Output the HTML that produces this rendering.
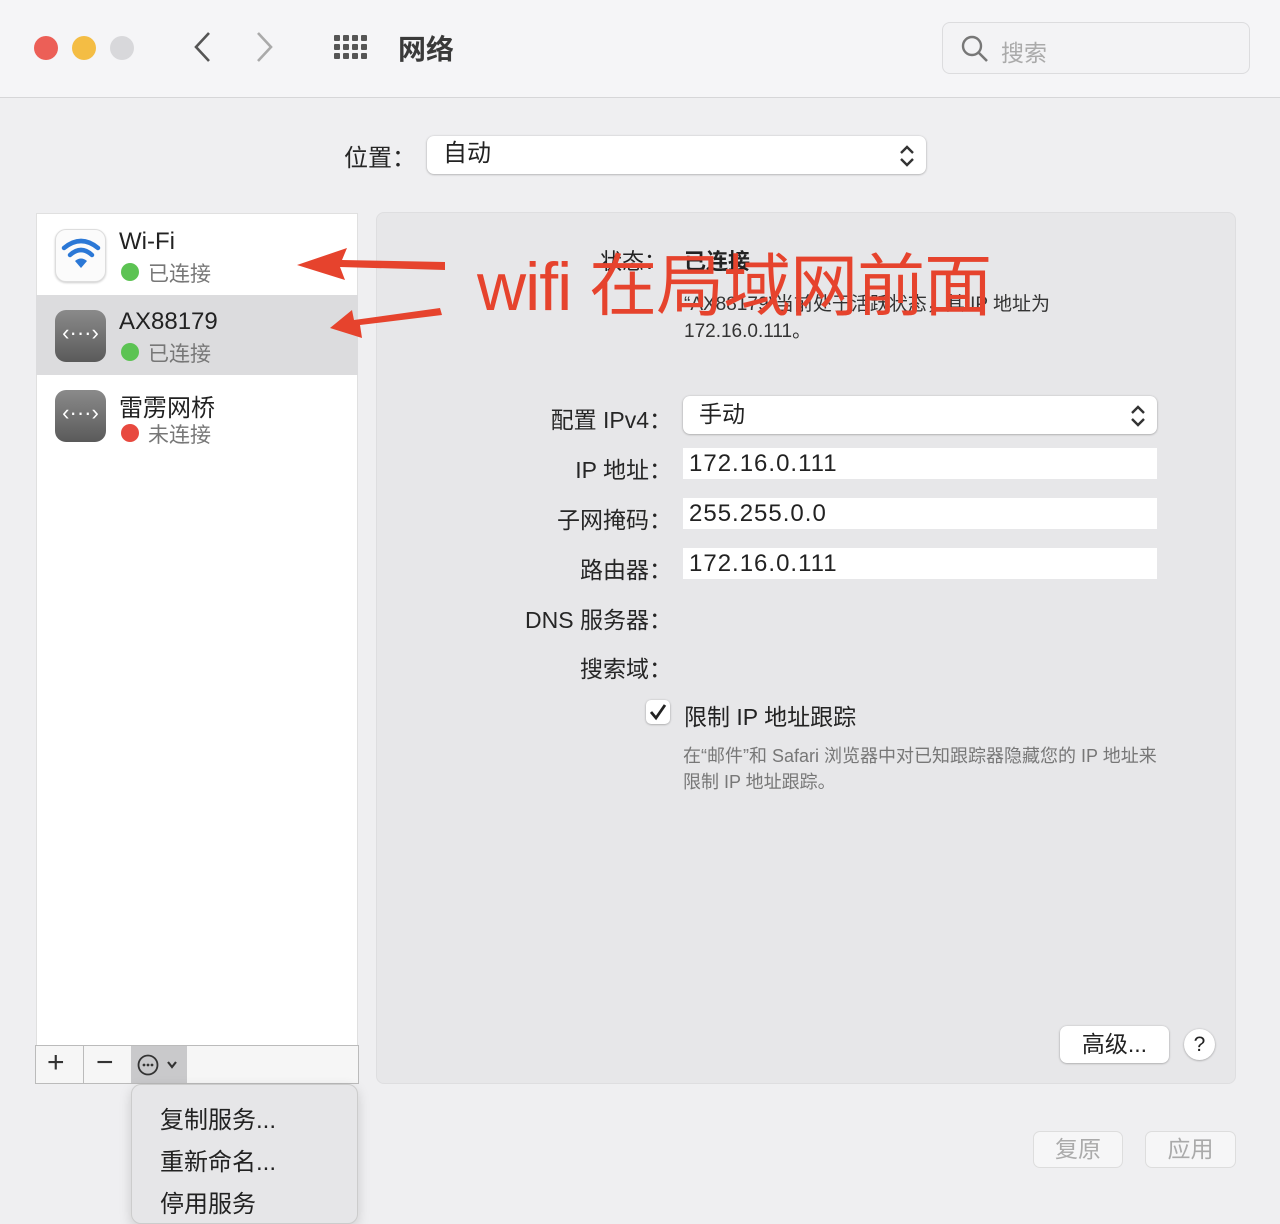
<!DOCTYPE html>
<html><head><meta charset="utf-8"><style>
*{margin:0;padding:0;box-sizing:border-box}
body{width:1280px;height:1204px;background:#efeff1;font-family:"Liberation Sans","Noto Sans CJK SC",sans-serif;color:#222;position:relative;overflow:hidden}
.a{position:absolute}
.lbl{position:absolute;font-size:23px;color:#262626;text-align:right;width:200px}
.fld{position:absolute;left:683px;width:474px;height:31px;background:#fff;font-size:24px;padding-left:6px;line-height:31px;letter-spacing:1px;color:#222}
.btn{position:absolute;background:#fff;border-radius:7px;box-shadow:0 0.5px 2px rgba(0,0,0,.35);font-size:23px;text-align:center}
</style></head><body>
<div class="a" style="left:0;top:0;width:1280px;height:98px;background:#f5f5f7;border-bottom:1px solid #d6d6d8"></div>
<div class="a" style="left:34px;top:36px;width:24px;height:24px;border-radius:50%;background:#ec5f57"></div>
<div class="a" style="left:72px;top:36px;width:24px;height:24px;border-radius:50%;background:#f4bd44"></div>
<div class="a" style="left:110px;top:36px;width:24px;height:24px;border-radius:50%;background:#d8d8db"></div>
<svg class="a" style="left:190px;top:30px" width="100" height="34"><path d="M19 3 L6 17 L19 31" stroke="#555" stroke-width="2.6" fill="none"/><path d="M76 3 L89 17 L76 31" stroke="#aaa" stroke-width="2.6" fill="none" transform="translate(-8,0)"/></svg>
<svg class="a" style="left:334px;top:34px" width="36" height="26"><g fill="#555"><rect x="0" y="1" width="6" height="6" rx="1"/><rect x="9" y="1" width="6" height="6" rx="1"/><rect x="18" y="1" width="6" height="6" rx="1"/><rect x="27" y="1" width="6" height="6" rx="1"/><rect x="0" y="10" width="6" height="6" rx="1"/><rect x="9" y="10" width="6" height="6" rx="1"/><rect x="18" y="10" width="6" height="6" rx="1"/><rect x="27" y="10" width="6" height="6" rx="1"/><rect x="0" y="19" width="6" height="6" rx="1"/><rect x="9" y="19" width="6" height="6" rx="1"/><rect x="18" y="19" width="6" height="6" rx="1"/><rect x="27" y="19" width="6" height="6" rx="1"/></g></svg>
<div class="a" style="left:398px;top:28px;font-size:28px;font-weight:bold;color:#3a3a3a">网络</div>
<div class="a" style="left:942px;top:22px;width:308px;height:52px;border:1px solid #dcdcde;border-radius:8px;background:#f3f3f5"></div>
<svg class="a" style="left:960px;top:34px" width="30" height="30"><circle cx="12" cy="12" r="9" stroke="#777" stroke-width="2.4" fill="none"/><path d="M19 19 L27 27" stroke="#777" stroke-width="2.6"/></svg>
<div class="a" style="left:1001px;top:34px;font-size:23px;color:#aaa">搜索</div>

<div class="a" style="left:344px;top:138px;font-size:24px;color:#262626">位置：</div>
<div class="btn" style="left:427px;top:136px;width:499px;height:38px;text-align:left;padding-left:16px;line-height:36px;font-size:24px">自动</div>
<svg class="a" style="left:898px;top:143px" width="18" height="26"><path d="M3 10 L9 4 L15 10 M3 16 L9 22 L15 16" stroke="#333" stroke-width="2.4" fill="none"/></svg>

<div class="a" style="left:36px;top:213px;width:322px;height:833px;background:#fff;border:1px solid #e0e0e0"></div>
<div class="a" style="left:36px;top:295px;width:322px;height:80px;background:#dcdcde"></div>
<div class="a" style="left:55px;top:229px;width:51px;height:53px;border-radius:11px;background:#fbfbfb;border:1px solid #ddd;box-shadow:0 1px 2px rgba(0,0,0,.2)"></div>
<svg class="a" style="left:58px;top:232px" width="46" height="46"><g fill="none" stroke="#2b78d6" stroke-width="4.5" stroke-linecap="round"><path d="M6 16 Q23 2 40 16"/><path d="M12 23 Q23 13 34 23"/></g><path d="M17 29 Q23 24 29 29 L23 36 Z" fill="#2b78d6"/></svg>
<div class="a" style="left:119px;top:228px;font-size:24px">Wi-Fi</div>
<div class="a" style="left:121px;top:263px;width:18px;height:18px;border-radius:50%;background:#5cc353"></div>
<div class="a" style="left:148px;top:258px;font-size:21px;color:#777">已连接</div>
<div class="a" style="left:55px;top:310px;width:51px;height:52px;border-radius:11px;background:linear-gradient(#8a8a8a,#5a5a5a)"></div>
<div class="a" style="left:55px;top:320px;width:51px;text-align:center;color:#fff;font-size:22px">‹···›</div>
<div class="a" style="left:119px;top:308px;font-size:24px">AX88179</div>
<div class="a" style="left:121px;top:343px;width:18px;height:18px;border-radius:50%;background:#5cc353"></div>
<div class="a" style="left:148px;top:338px;font-size:21px;color:#777">已连接</div>
<div class="a" style="left:55px;top:390px;width:51px;height:52px;border-radius:11px;background:linear-gradient(#8a8a8a,#5a5a5a)"></div>
<div class="a" style="left:55px;top:400px;width:51px;text-align:center;color:#fff;font-size:22px">‹···›</div>
<div class="a" style="left:119px;top:388px;font-size:24px">雷雳网桥</div>
<div class="a" style="left:121px;top:424px;width:18px;height:18px;border-radius:50%;background:#e8493f"></div>
<div class="a" style="left:148px;top:419px;font-size:21px;color:#777">未连接</div>

<div class="a" style="left:35px;top:1045px;width:324px;height:39px;background:#f6f6f6;border:1px solid #bbb"></div>
<div class="a" style="left:83px;top:1046px;width:1px;height:37px;background:#bbb"></div>
<div class="a" style="left:131px;top:1046px;width:56px;height:37px;background:#c9c9cb"></div>
<div class="a" style="left:47px;top:1046px;font-size:30px;color:#333">+</div>
<div class="a" style="left:96px;top:1046px;font-size:30px;color:#333">−</div>
<svg class="a" style="left:136px;top:1053px" width="48" height="24"><circle cx="12" cy="12" r="9.5" stroke="#333" stroke-width="1.8" fill="none"/><g fill="#333"><circle cx="8" cy="12" r="1.4"/><circle cx="12" cy="12" r="1.4"/><circle cx="16" cy="12" r="1.4"/></g><path d="M32 9 L36 14 L40 9" stroke="#333" stroke-width="2.2" fill="none"/></svg>
<div class="a" style="left:131px;top:1084px;width:227px;height:140px;background:#e6e6e8;border:1px solid #ccc;border-radius:10px;box-shadow:0 4px 12px rgba(0,0,0,.15)"></div>
<div class="a" style="left:160px;top:1100px;font-size:24px">复制服务...</div>
<div class="a" style="left:160px;top:1142px;font-size:24px">重新命名...</div>
<div class="a" style="left:160px;top:1184px;font-size:24px">停用服务</div>

<div class="a" style="left:376px;top:212px;width:860px;height:872px;background:#e7e7e9;border:1px solid #dedee0;border-radius:8px"></div>
<div class="a" style="left:600px;top:244px;font-size:22px">状态：</div>
<div class="a" style="left:684px;top:244px;font-size:22px;font-weight:bold">已连接</div>
<div class="a" style="left:684px;top:289px;font-size:19px;color:#333">“AX88179”当前处于活跃状态，其 IP 地址为</div>
<div class="a" style="left:684px;top:316px;font-size:19px;color:#333">172.16.0.111。</div>

<div class="lbl" style="left:472px;top:401px">配置 IPv4：</div>
<div class="btn" style="left:683px;top:396px;width:474px;height:38px;text-align:left;padding-left:16px;line-height:36px;font-size:23px">手动</div>
<svg class="a" style="left:1129px;top:403px" width="18" height="26"><path d="M3 10 L9 4 L15 10 M3 16 L9 22 L15 16" stroke="#333" stroke-width="2.4" fill="none"/></svg>
<div class="lbl" style="left:472px;top:451px">IP 地址：</div><div class="fld" style="top:448px">172.16.0.111</div>
<div class="lbl" style="left:472px;top:501px">子网掩码：</div><div class="fld" style="top:498px">255.255.0.0</div>
<div class="lbl" style="left:472px;top:551px">路由器：</div><div class="fld" style="top:548px">172.16.0.111</div>
<div class="lbl" style="left:472px;top:601px">DNS 服务器：</div>
<div class="lbl" style="left:472px;top:650px">搜索域：</div>
<div class="btn" style="left:646px;top:700px;width:24px;height:24px;border-radius:5px"></div>
<svg class="a" style="left:646px;top:700px" width="24" height="24"><path d="M5 12 L10 18 L19 5" stroke="#222" stroke-width="2.8" fill="none"/></svg>
<div class="a" style="left:684px;top:698px;font-size:23px">限制 IP 地址跟踪</div>
<div class="a" style="left:683px;top:743px;font-size:18px;color:#777;line-height:26px;width:480px">在“邮件”和 Safari 浏览器中对已知跟踪器隐藏您的 IP 地址来限制 IP 地址跟踪。</div>

<div class="btn" style="left:1060px;top:1026px;width:109px;height:37px;line-height:36px">高级...</div>
<div class="btn" style="left:1184px;top:1029px;width:31px;height:31px;border-radius:50%;line-height:31px;font-size:21px">?</div>
<div class="a" style="left:1033px;top:1131px;width:90px;height:37px;border-radius:7px;background:#f6f6f7;border:1px solid #ddd;color:#aaa;font-size:23px;text-align:center;line-height:35px">复原</div>
<div class="a" style="left:1145px;top:1131px;width:91px;height:37px;border-radius:7px;background:#f6f6f7;border:1px solid #ddd;color:#aaa;font-size:23px;text-align:center;line-height:35px">应用</div>

<div class="a" style="left:477px;top:242px;font-size:68px;letter-spacing:-1px;color:#e6432d;line-height:90px;white-space:nowrap">wifi 在局域网前面</div>
<svg class="a" style="left:290px;top:240px" width="160" height="100"><path d="M155 22 L155 30 L50 27 L55 40 L7 25 L57 8 L52 20 Z" fill="#e6432d"/><path d="M150 68 L152 75 L70 85 L72 98 L40 88 L62 70 L64 80 Z" fill="#e6432d"/></svg>
</body></html>
